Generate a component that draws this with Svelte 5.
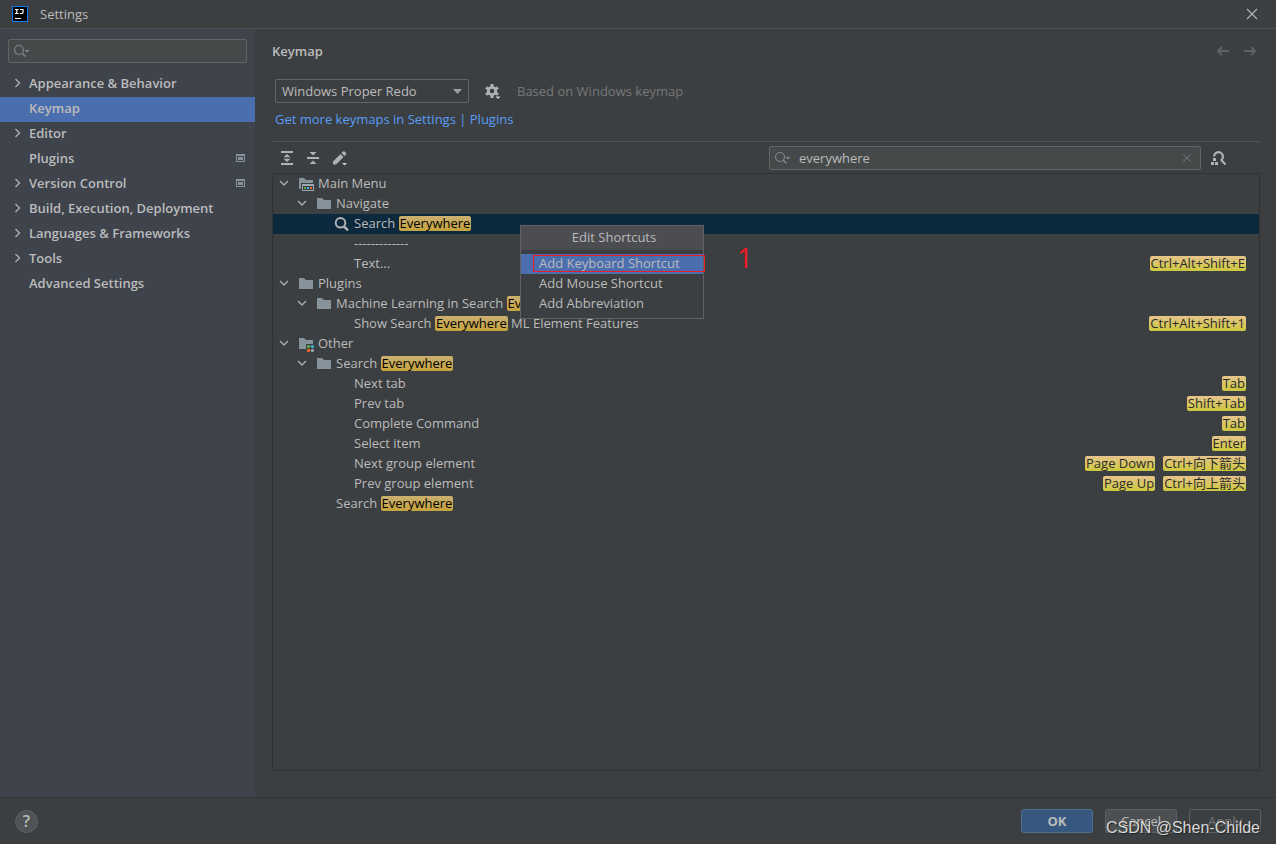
<script>
  let query = $state("everywhere");
  let filter = $state("");
  let keymap = $state("Windows Proper Redo");

  const sections = [
    { name: "Appearance & Behavior", expandable: true },
    { name: "Keymap", selected: true },
    { name: "Editor", expandable: true },
    { name: "Plugins", project: true },
    { name: "Version Control", expandable: true, project: true },
    { name: "Build, Execution, Deployment", expandable: true },
    { name: "Languages & Frameworks", expandable: true },
    { name: "Tools", expandable: true },
    { name: "Advanced Settings" },
  ];

  // hit is the part of the label that matches the query
  const rows = [
    { level: 0, icon: "menu", open: true, text: "Main Menu" },
    { level: 1, icon: "folder", open: true, text: "Navigate" },
    { level: 2, icon: "search", text: "Search ", hit: "Everywhere", selected: true },
    { level: 2, text: "-------------" },
    { level: 2, text: "Text...", keys: ["Ctrl+Alt+Shift+E"] },
    { level: 0, icon: "folder", open: true, text: "Plugins" },
    { level: 1, icon: "folder", open: true, text: "Machine Learning in Search ", hit: "Everywhere" },
    { level: 2, text: "Show Search ", hit: "Everywhere", rest: " ML Element Features", keys: ["Ctrl+Alt+Shift+1"] },
    { level: 0, icon: "other", open: true, text: "Other" },
    { level: 1, icon: "folder", open: true, text: "Search ", hit: "Everywhere" },
    { level: 2, text: "Next tab", keys: ["Tab"] },
    { level: 2, text: "Prev tab", keys: ["Shift+Tab"] },
    { level: 2, text: "Complete Command", keys: ["Tab"] },
    { level: 2, text: "Select item", keys: ["Enter"] },
    { level: 2, text: "Next group element", keys: ["Page Down", "Ctrl+向下箭头"] },
    { level: 2, text: "Prev group element", keys: ["Page Up", "Ctrl+向上箭头"] },
    { level: 1, text: "Search ", hit: "Everywhere" },
  ];
</script>

{#snippet lens()}
  <svg class="lens" width="18" height="16" viewBox="0 0 18 16" fill="none" stroke="#7d868c">
    <circle cx="6" cy="7" r="4.5" stroke-width="1.2" />
    <path d="M9.3 10.3 12.5 13.5" stroke-width="1.6" />
    <path d="M11.5 7h5L14 9.6z" fill="#7d868c" stroke="none" />
  </svg>
{/snippet}

{#snippet nodeIcon(kind)}
  <svg width="16" height="16" viewBox="0 0 16 16">
    {#if kind === "search"}
      <circle cx="6.5" cy="6.8" r="4.8" fill="none" stroke="#afb1b3" stroke-width="2" />
      <path d="M10 10.3 14 14.3" stroke="#afb1b3" stroke-width="2.4" />
    {:else if kind === "menu"}
      <path d="M1 2h5l2 2h7v3H3v6H1z" fill="#87939a" />
      <path d="M4 8h12v7H4z" fill="#9aa7b0" />
      <path d="M5 10h10v4H5z" fill="#3c3f41" />
      <path d="M6 11h2v2H6z" fill="#62b543" />
      <path d="M9 11h2v2H9z" fill="#40b6e0" />
      <path d="M12 11h2v2h-2z" fill="#f26522" />
    {:else if kind === "other"}
      <path d="M1 2h5l2 2h7v4H8v5H1z" fill="#87939a" />
      <circle cx="10.5" cy="10.5" r="1.6" fill="#62b543" />
      <circle cx="14.4" cy="10.5" r="1.6" fill="#40b6e0" />
      <circle cx="10.5" cy="14.4" r="1.6" fill="#f26522" />
      <circle cx="14.4" cy="14.4" r="1.6" fill="#9aa7b0" />
    {:else}
      <path d="M1 2h5l2 2h7v9H1z" fill="#87939a" />
    {/if}
  </svg>
{/snippet}

<div class="dialog">
  <header>
    <svg width="16" height="16" viewBox="0 0 16 16">
      <path d="M0 0h16v16H0z" fill="#087cfa" />
      <path d="M1 1h14v14H1z" fill="#000" />
      <path d="M3 3.5h3.6M4.8 3v5M3 7.5h3.6M8 3.5h3v3Q11 7.5 9.6 7.5H7.8" fill="none" stroke="#fff" stroke-width="1.2" />
      <path d="M3 12h6v1H3z" fill="#fff" />
    </svg>
    <span class="title">Settings</span>
    <button class="plain close" aria-label="Close">
      <svg width="12" height="12" viewBox="0 0 12 12" stroke="#b4b6b8" stroke-width="1.1">
        <path d="M1 1 11 11M11 1 1 11" />
      </svg>
    </button>
  </header>

  <div class="body">
    <aside>
      <div class="field">
        {@render lens()}
        <input type="text" aria-label="Search settings" bind:value={filter} />
      </div>
      <nav>
        {#each sections as s}
          <a href="#settings" class:selected={s.selected}>
            <span class="twisty">
              {#if s.expandable}
                <svg width="8" height="10" viewBox="0 0 8 10" fill="none" stroke="#adadad" stroke-width="1.4">
                  <path d="M1.5 1 5.5 5 1.5 9" />
                </svg>
              {/if}
            </span>
            <span class="name">{s.name}</span>
            {#if s.project}
              <svg width="9" height="8" viewBox="0 0 9 8">
                <path d="M0 0h9v8H0z" fill="#87939a" />
                <path d="M1 2h7v5H1z" fill="#3f434c" />
                <path d="M2 3h5v3H2z" fill="#87939a" />
              </svg>
            {/if}
          </a>
        {/each}
      </nav>
    </aside>

    <main>
      <div class="heading">
        <h1>Keymap</h1>
        <button class="plain" aria-label="Back">
          <svg width="14" height="12" viewBox="0 0 14 12" fill="none" stroke="#606366" stroke-width="1.8">
            <path d="M13 6H2M6 2 2 6 6 10" />
          </svg>
        </button>
        <button class="plain" aria-label="Forward">
          <svg width="14" height="12" viewBox="0 0 14 12" fill="none" stroke="#606366" stroke-width="1.8">
            <path d="M1 6h11M8 2 12 6 8 10" />
          </svg>
        </button>
      </div>

      <div class="scheme">
        <div class="combo">
          <select aria-label="Keymap" bind:value={keymap}>
            <option>Windows Proper Redo</option>
            <option>Windows</option>
          </select>
          <svg width="9" height="5" viewBox="0 0 9 5"><path d="M0 0h9L4.5 5z" fill="#9da0a2" /></svg>
        </div>
        <button class="plain" aria-label="Keymap actions">
          <svg width="16" height="16" viewBox="0 0 16 16">
            <g fill="#afb1b3">
              <path d="M5.5 1h3v3h-3zM5.5 12h3v3h-3z" />
              <path d="M5.5 1h3v3h-3zM5.5 12h3v3h-3z" transform="rotate(60 7 8)" />
              <path d="M5.5 1h3v3h-3zM5.5 12h3v3h-3z" transform="rotate(120 7 8)" />
            </g>
            <circle cx="7" cy="8" r="3.7" fill="none" stroke="#afb1b3" stroke-width="2.8" />
            <path d="M10 13h6v3h-6z" fill="#3c3f41" />
            <path d="M10.5 13.5h5L13 16z" fill="#d0d2d4" />
          </svg>
        </button>
        <span class="hint">Based on Windows keymap</span>
      </div>
      <p class="links">
        <a href="#keymaps">Get more keymaps in Settings</a> | <a href="#plugins">Plugins</a>
      </p>

      <div class="toolbar">
        <button class="plain" aria-label="Expand all">
          <svg width="16" height="16" viewBox="0 0 16 16" fill="#afb1b3">
            <path d="M2 1h12v2H2zM2 13h12v2H2zM8 4l3.5 3.3h-7zM8 12 4.5 8.7h7z" />
          </svg>
        </button>
        <button class="plain" aria-label="Collapse all">
          <svg width="16" height="16" viewBox="0 0 16 16" fill="#afb1b3">
            <path d="M2 7h12v2H2zM4.5 2h7L8 5.5zM4.5 14h7L8 10.5z" />
          </svg>
        </button>
        <button class="plain" aria-label="Edit shortcuts">
          <svg width="16" height="16" viewBox="0 0 16 16" fill="#afb1b3">
            <path d="M2 11.5 9.5 4l3 3L5 14.5H2zM10.500 3 12 1.5q.8-.7 1.6 0L15 2.9q.7.8 0 1.6L13.500 6z" />
            <path d="M11 13h5l-2.5 2.5z" fill="#d0d2d4" />
          </svg>
        </button>
        <div class="field query">
          {@render lens()}
          <input type="text" aria-label="Search actions" bind:value={query} />
          <button class="plain" aria-label="Clear">
            <svg width="8" height="8" viewBox="0 0 8 8" stroke="#6f7476"><path d="M0 0 8 8M8 0 0 8" /></svg>
          </button>
        </div>
        <button class="plain" aria-label="Find by shortcut">
          <svg width="16" height="16" viewBox="0 0 16 16">
            <path d="M3 6.5a4.5 4.5 0 1 1 7 3.8M10 9.8 14.5 14.5" fill="none" stroke="#afb1b3" stroke-width="2.2" />
            <path d="M2 8h3v3H2zM0 12h3v3H0zM4 12h3v3H4z" fill="#afb1b3" />
          </svg>
        </button>
      </div>

      <div class="tree-box">
        <ul class="tree">
          {#each rows as row}
            <li class={`level${row.level}`} class:selected={row.selected}>
              <span class="arrow">
                {#if row.open}
                  <svg width="10" height="7" viewBox="0 0 10 7" fill="none" stroke="#adadad" stroke-width="1.4">
                    <path d="M1 1 5 5 9 1" />
                  </svg>
                {/if}
              </span>
              {#if row.icon}
                <span class="icon">{@render nodeIcon(row.icon)}</span>
              {/if}
              <span class="label">{row.text}{#if row.hit}<mark>{row.hit}</mark>{/if}{row.rest ?? ""}</span>
              {#each row.keys ?? [] as key}
                <kbd>{key}</kbd>
              {/each}
            </li>
          {/each}
        </ul>

        <div class="popup">
          <div class="caption">Edit Shortcuts</div>
          <div class="items">
            <button class="selected">Add Keyboard Shortcut</button>
            <button>Add Mouse Shortcut</button>
            <button>Add Abbreviation</button>
          </div>
          <div class="frame"></div>
          <span class="step">1</span>
        </div>
      </div>
    </main>
  </div>

  <footer>
    <button class="help" aria-label="Help">?</button>
    <button class="btn ok">OK</button>
    <button class="btn">Cancel</button>
    <button class="btn apply" disabled>Apply</button>
    <span class="watermark">CSDN @Shen-Childe</span>
  </footer>
</div>

<style>
  :global(body) {
    margin: 0;
    background: #3c3f41;
  }

  .dialog {
    display: flex;
    flex-direction: column;
    min-height: 100vh;
    color: #bbbbbb;
    font: 13px/20px "Open Sans", "Noto Sans CJK SC", sans-serif;
  }

  .dialog,
  .dialog * {
    box-sizing: border-box;
  }

  svg {
    display: block;
    flex: none;
  }

  button,
  input,
  select {
    margin: 0;
    color: inherit;
    font: inherit;
  }

  a {
    text-decoration: none;
  }

  .plain {
    flex: none;
    padding: 0;
    background: none;
    border: none;
  }

  header {
    display: flex;
    align-items: center;
    gap: 12px;
    height: 29px;
    padding: 0 18px 0 12px;
    border-bottom: 1px solid #515151;
  }

  .close {
    margin-left: auto;
  }

  .body {
    display: flex;
    flex: 1;
  }

  aside {
    flex: none;
    width: 255px;
    padding-top: 10px;
    background: #3f434c;
  }

  .field {
    display: flex;
    align-items: center;
    height: 24px;
    padding: 0 4px;
    background: #45494a;
    border: 1px solid #646464;
    border-radius: 2px;
  }

  .field input {
    flex: 1;
    min-width: 0;
    padding: 0;
    background: none;
    border: none;
    outline: none;
  }

  aside .field {
    margin: 0 8px 9px;
  }

  nav a {
    display: flex;
    align-items: center;
    height: 25px;
    padding: 0 10px 3px 14px;
    color: #bbbbbb;
    font-weight: 600;
  }

  nav a.selected {
    background: #4b6eaf;
  }

  .twisty {
    width: 15px;
  }

  .name {
    flex: 1;
  }

  main {
    display: flex;
    flex: 1;
    flex-direction: column;
    min-width: 0;
    padding: 12px 16px 26px 17px;
  }

  .heading {
    display: flex;
    align-items: center;
    gap: 13px;
    padding-right: 3px;
  }

  h1 {
    flex: 1;
    margin: 0;
    font-size: 13px;
    font-weight: 600;
  }

  .scheme {
    display: flex;
    align-items: center;
    gap: 16px;
    margin: 18px 3px 6px;
  }

  .combo {
    display: flex;
    position: relative;
    align-items: center;
    width: 194px;
    height: 24px;
  }

  .combo select {
    width: 100%;
    height: 100%;
    padding: 0 24px 0 6px;
    appearance: none;
    background: #3c3f41;
    border: 1px solid #646464;
    border-radius: 2px;
  }

  .combo svg {
    position: absolute;
    right: 7px;
    pointer-events: none;
  }

  .hint {
    color: #777777;
  }

  .links {
    margin: 0 3px 12px;
    color: #589df6;
  }

  .links a {
    color: inherit;
  }

  .toolbar {
    display: flex;
    align-items: center;
    gap: 10px;
    height: 32px;
    padding: 0 33px 0 7px;
    border-top: 1px solid #515151;
  }

  .query {
    width: 432px;
    margin-left: auto;
    padding-right: 9px;
  }

  .query input {
    padding-left: 7px;
  }

  .tree-box {
    position: relative;
    flex: 1;
    border: 1px solid #323232;
  }

  .tree {
    margin: 0;
    padding: 0;
    list-style: none;
  }

  li {
    display: flex;
    align-items: center;
    height: 20px;
    padding: 0 13px 2px 0;
  }

  li.selected {
    background: #0d293e;
  }

  .level0 {
    padding-left: 2px;
  }

  .level1 {
    padding-left: 20px;
  }

  .level2 {
    padding-left: 38px;
  }

  .arrow {
    display: flex;
    justify-content: center;
    width: 18px;
  }

  .icon {
    width: 25px;
    padding: 2px 0 0 5px;
  }

  /* leaves without an icon keep the label column of their level */
  .arrow + .label {
    padding-left: 25px;
  }

  .label {
    flex: 1;
    white-space: pre;
  }

  mark,
  kbd {
    display: inline-block;
    padding: 0 1px;
    border-radius: 2px;
    line-height: 15px;
  }

  mark {
    background: linear-gradient(#cbb070, #c4a23c);
    color: #000000;
  }

  kbd {
    margin-left: 8px;
    background: linear-gradient(#e6c48c, #cdc83c);
    color: #2b2b2b;
    font-family: inherit;
  }

  .popup {
    position: absolute;
    top: 51px;
    left: 247px;
    width: 184px;
    background: #3c3f41;
    border: 1px solid #616161;
  }

  .caption {
    padding: 1px 0 3px 4px;
    background: #4b4d51;
    text-align: center;
  }

  .items {
    padding: 4px 0;
  }

  .items button {
    display: block;
    width: 100%;
    height: 20px;
    padding: 0 18px 2px;
    background: none;
    border: none;
    line-height: 18px;
    text-align: left;
  }

  .items .selected {
    background: #4b6eaf;
  }

  .frame {
    position: absolute;
    top: 29px;
    left: 12px;
    width: 172px;
    height: 17px;
    border: 1px solid #ed1c24;
  }

  .step {
    position: absolute;
    top: 15px;
    left: 216px;
    color: #ed1c24;
    font-size: 28px;
    line-height: 32px;
  }

  footer {
    display: flex;
    position: relative;
    align-items: center;
    gap: 12px;
    height: 47px;
    padding: 0 15px;
    border-top: 1px solid #323232;
  }

  .help {
    width: 23px;
    height: 23px;
    margin-right: auto;
    padding: 0;
    background: #4f5355;
    border: 1px solid #5e6060;
    border-radius: 50%;
    font-size: 16px;
    font-weight: 600;
  }

  .btn {
    width: 72px;
    height: 24px;
    padding: 0;
    background: #4c5052;
    border: 1px solid #5e6060;
    border-radius: 3px;
  }

  .ok {
    background: #365880;
    border-color: #4c708c;
    font-weight: bold;
  }

  .apply {
    background: none;
    color: #777777;
  }

  .watermark {
    position: absolute;
    right: 16px;
    bottom: 6px;
    color: #d8d8d8;
    font: 16px/20px "Liberation Sans", sans-serif;
    text-shadow: 1px 1px 1px #222222;
  }
</style>
